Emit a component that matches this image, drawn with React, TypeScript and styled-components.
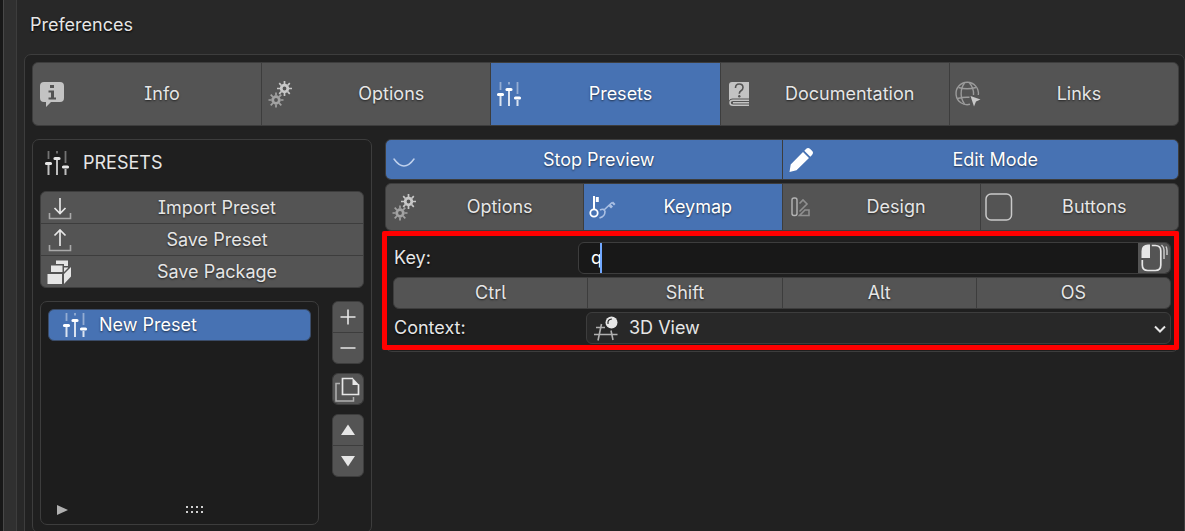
import React from "react";
import styled, { createGlobalStyle } from "styled-components";

const Global = createGlobalStyle`
  *, *::before, *::after { box-sizing: border-box; }
  html, body, #root { height: 100%; }
  body {
    margin: 0;
    background: #282828;
    overflow: hidden;
    color: #e6e6e6;
    font-family: Inter, "Liberation Sans", sans-serif;
    font-size: 18px;
    line-height: 24px;
    font-feature-settings: "cv05", "cv08";
  }
  button, input, select { font: inherit; color: inherit; font-feature-settings: inherit; }
`;

const line = "#3d3d3d";
const grey = "#545454";
const blue = "#4772b3";

const Shell = styled.div`
  display: flex;
  height: 100%;
  overflow: hidden;
`;

const Rail = styled.div`
  flex: none;
  width: 17px;
  border-left: 3px solid #181818;
  border-right: 1px solid ${line};
  background: #303030;
  box-shadow: inset 1px 0 0 #484848;
`;

const Page = styled.main`
  flex: 1;
  min-width: 0;
  display: flex;
  flex-direction: column;
  padding-left: 7px;
`;

const Title = styled.h1`
  margin: 0;
  padding: 13px 6px 17px;
  font-size: 18px;
  line-height: 24px;
  font-weight: 400;
  text-shadow: 0 1px 2px #000;
`;

const Window = styled.section`
  flex: none;
  border: 1px solid ${line};
  border-radius: 7px;
  background: #212121;
  padding: 7px 5px 7px 7px;
`;

const Columns = styled.div`
  display: flex;
  gap: 13px;
  margin-top: 13px;
`;

const Group = styled.div<{ $column?: boolean }>`
  display: flex;
  flex-direction: ${(p) => (p.$column ? "column" : "row")};
  gap: 1px;
  border: 1px solid ${line};
  border-radius: 6px;
  background: ${line};
  overflow: hidden;
`;

const Tool = styled.button<{ $h: number; $on?: boolean }>`
  flex: 1 1 0;
  min-width: 0;
  min-height: ${(p) => p.$h}px;
  display: flex;
  align-items: center;
  border: 0;
  padding: 0 4px;
  background: ${(p) => (p.$on ? blue : grey)};
  color: ${(p) => (p.$on ? "#fff" : "#e6e6e6")};
  text-shadow: 0 1px 2px rgba(0, 0, 0, 0.6);
  svg { flex: none; }
`;

const ToolText = styled.span`
  flex: 1;
  text-align: center;
`;

const Presets = styled.section`
  flex: none;
  width: 340px;
  border: 1px solid ${line};
  border-radius: 7px;
  background: #1f1f1f;
  padding: 8px 7px 7px;
`;

const PresetsTitle = styled.h2`
  display: flex;
  align-items: center;
  gap: 10px;
  margin: 0 0 13px 3px;
  font-size: 18px;
  line-height: 24px;
  font-weight: 400;
`;

const ListRow = styled.div`
  display: flex;
  gap: 13px;
  margin-top: 13px;
`;

const ListBox = styled.div`
  flex: 1;
  height: 224px;
  display: flex;
  flex-direction: column;
  justify-content: space-between;
  border: 1px solid ${line};
  border-radius: 7px;
  background: #1d1d1d;
  padding: 7px;
`;

const ListItem = styled.button`
  display: flex;
  align-items: center;
  gap: 8px;
  height: 32px;
  border: 1px solid #3b4c68;
  border-radius: 6px;
  background: ${blue};
  color: #fff;
  padding: 0 12px;
  text-shadow: 0 1px 2px rgba(0, 0, 0, 0.6);
`;

const ListFoot = styled.div`
  display: grid;
  grid-template-columns: 28px 1fr;
  align-items: center;
  padding: 0 8px 2px;
  svg:last-child { justify-self: center; }
`;

const SideTools = styled.div`
  flex: none;
  width: 32px;
  display: flex;
  flex-direction: column;
  gap: 9px;
`;

const SideButton = styled.button`
  display: grid;
  place-items: center;
  height: 30px;
  border: 0;
  padding: 0;
  background: ${grey};
`;

const Editor = styled.section`
  flex: 1;
  min-width: 0;
`;

const Rows = styled.div`
  display: flex;
  flex-direction: column;
  gap: 3px;
`;

const Keymap = styled.form`
  position: relative;
  display: flex;
  flex-direction: column;
  gap: 3px;
  border: 1px solid ${line};
  border-radius: 0 0 7px 7px;
  background: #1f1f1f;
  padding: 10px 7px 7px;
`;

const Highlight = styled.div`
  position: absolute;
  inset: -1px -1px 1px -4px;
  border: 5px solid #ff0000;
  border-radius: 2px;
  pointer-events: none;
`;

const Field = styled.div<{ $label: number }>`
  display: grid;
  grid-template-columns: ${(p) => p.$label}px 1fr;
  align-items: center;
  height: 32px;
  text-shadow: 0 1px 2px #000;
  label { padding-left: 1px; }
`;

const KeyBox = styled.div`
  display: flex;
  height: 32px;
  border: 1px solid ${line};
  border-radius: 6px;
  background: #181818;
  overflow: hidden;
`;

const Entry = styled.div`
  position: relative;
  flex: 1;
  display: flex;
`;

const KeyInput = styled.input`
  flex: 1;
  min-width: 0;
  border: 0;
  outline: 0;
  padding: 0 12px;
  background: transparent;
  color: #fff;
`;

const Caret = styled.span`
  position: absolute;
  left: 21px;
  top: 0;
  bottom: 0;
  width: 2px;
  background: #71a8ff;
`;

const MouseButton = styled.button`
  flex: none;
  width: 32px;
  display: grid;
  place-items: center;
  border: 0;
  padding: 0;
  background: ${grey};
`;

const SelectBox = styled.div`
  display: flex;
  align-items: center;
  height: 32px;
  border: 1px solid ${line};
  border-radius: 6px;
  background: #282828;
  padding: 0 4px 0 5px;
  gap: 7px;
`;

const Select = styled.select`
  flex: 1;
  min-width: 0;
  appearance: none;
  border: 0;
  background: transparent;
  padding: 0;
`;

const svg = { fill: "none", "aria-hidden": true } as const;

const Info = () => (
  <svg {...svg} width="30" height="30" viewBox="0 0 30 30">
    <path fill="#c3c3c3" d="M7 3h16a4 4 0 0 1 4 4v12a4 4 0 0 1-4 4H14l-5 5v-5H7a4 4 0 0 1-4-4V7a4 4 0 0 1 4-4Z" />
    <path fill={grey} d="M13 6h4v3h-4zM11.500 11.500H17V18.500h2V20.500h-7.500v-2H14v-5h-2.500z" />
  </svg>
);

const Gear = ({ x, y, c }: { x: number; y: number; c: string }) => (
  <g transform={`translate(${x} ${y})`} stroke={c}>
    <circle r="3.300" strokeWidth="2.800" />
    {[0, 45, 90, 135, 180, 225, 270, 315].map((a) => (
      <path key={a} d="M0-4.500V-7.500" strokeWidth="1.700" transform={`rotate(${a})`} />
    ))}
  </g>
);

const Gears = () => (
  <svg {...svg} width="30" height="30" viewBox="0 0 30 30">
    <Gear x={10} y={21} c="#a2a2a2" />
    <Gear x={18.500} y={9.500} c="#c8c8c8" />
  </svg>
);

const Sliders = () => (
  <svg {...svg} width="30" height="30" viewBox="1 0 30 30">
    <path stroke="currentColor" strokeOpacity=".42" strokeWidth="1.800" d="M6.500 3v8M15 3v2.500M23.500 3v12" />
    <path stroke="currentColor" strokeOpacity=".8" strokeWidth="2" d="M6.500 17v10M15 12v15M23.500 21v6" />
    <path stroke="currentColor" strokeWidth="3.200" strokeLinecap="round" d="M4.500 15.500h4M13 10.500h4M21.500 19h4" />
  </svg>
);

const Book = () => (
  <svg {...svg} width="30" height="30" viewBox="1 0 30 30">
    <path fill="#c3c3c3" d="M8 3h17v16.500H8.500Q6 19.500 5 21.500V6Q5 3 8 3Z" />
    <path stroke="#c3c3c3" strokeWidth="1.500" d="M25 21.300H9Q6 21.300 6 23.800t3 2.500h16M9 23.800h16" />
    <path stroke={grey} strokeWidth="1.600" d="M11.500 9q0-4 3.700-4 3.800 0 3.800 3.500 0 2-2 3.200-1.700 1-1.700 3" />
    <circle cx="15.300" cy="17.300" r="1.200" fill={grey} />
  </svg>
);

const Globe = () => (
  <svg {...svg} width="30" height="30" viewBox="1 0 30 30">
    <g stroke="#9b9b9b" strokeWidth="1.400">
      <path d="M17 25.300A11.200 11.200 0 1 1 25.300 16" />
      <path d="M11.500 4C7 10 7 19 11.500 25M16.500 4c3.500 4 4.300 8 4 12M5.500 8.500q8.500 2.500 17.500 0M4.500 19.500q6-1.700 12-1.200" />
    </g>
    <path fill="#c8c8c8" d="m17.500 17 10 3.500-4.500 2-2 5Z" />
  </svg>
);

const Eye = () => (
  <svg {...svg} width="30" height="30" viewBox="1 0 30 30">
    <path stroke="#bfd0ec" strokeWidth="1.500" strokeLinecap="round" d="M5 14q10 14 20 0" />
  </svg>
);

const Pencil = () => (
  <svg {...svg} width="30" height="30" viewBox="1 0 30 30">
    <path fill="#fff" d="m17 7 6 6L10.500 25.200 3.500 27l1.200-7.500ZM18.300 5.700 20 4q2-2 4.200 0L26 5.800q2 2 0 4.200l-1.700 1.700Z" />
  </svg>
);

const Keys = () => (
  <svg {...svg} width="30" height="30" viewBox="1 0 30 30">
    <circle cx="7" cy="21" r="3.700" stroke="#fff" strokeWidth="1.800" />
    <path stroke="#fff" strokeWidth="2" d="M7 17.500V4" />
    <path fill="#fff" d="M8.800 5h3v5h-3z" />
    <path stroke="#a9bfe3" strokeWidth="1.600" d="M13 18q4-2 5 1.500 0 5-5.500 6.500M17 18 25 10.500" />
    <path fill="#a9bfe3" d="m21.500 14 2-2 2.500 2.500-2 2ZM24.500 11l1.500-1.500 2.500 2.500L27 13.500Z" />
  </svg>
);

const Swatches = () => (
  <svg {...svg} width="30" height="30" viewBox="2 0 30 30">
    <rect x="7" y="6" width="5" height="17.500" rx="2" stroke="#b5b5b5" strokeWidth="1.400" />
    <path stroke="#8f8f8f" strokeWidth="1.600" d="M14.500 11.500 18 8l4 4-7.500 7.500M20 18h4v5.500h-9.500l6-6" />
  </svg>
);

const Square = () => (
  <svg {...svg} width="30" height="30" viewBox="1 0 30 30">
    <rect x="2" y="2" width="25.500" height="26" rx="5" stroke="#c9c9c9" strokeWidth="1.500" />
  </svg>
);

const Tray = ({ up }: { up?: boolean }) => (
  <svg {...svg} width="30" height="30" viewBox="0 0 30 30">
    <path stroke="#a9a9a9" strokeWidth="1.600" d="M4.500 20v5.500h21V20" />
    <path stroke="#e6e6e6" strokeWidth="1.700" d={up ? "M15 21V5M9.500 10.500 15 5l5.500 5.500" : "M15 5v15.500M9.500 15l5.500 5.500 5.500-5.500"} />
  </svg>
);

const Boxes = () => (
  <svg {...svg} width="30" height="30" viewBox="1 0 30 30">
    <path fill="#e6e6e6" d="M3.500 17H18v10H3.500ZM7 8.500h11.500V15H7ZM12 3.500h12V9h-4V7h-8ZM20 17l7-7v9.500L20 27ZM20 10.500h4V11l-4 4Z" />
  </svg>
);

const Plus = ({ minus }: { minus?: boolean }) => (
  <svg {...svg} width="30" height="30" viewBox="0 0 30 30">
    <path stroke="#e6e6e6" strokeWidth="1.600" d={minus ? "M7.500 15h15" : "M7.500 15h15M15 7.500v15"} />
  </svg>
);

const Copy = () => (
  <svg {...svg} width="30" height="30" viewBox="1 0 30 30">
    <path stroke="#b0b0b0" strokeWidth="1.500" d="M8 9.500H4v17.500h17.500v-4" />
    <path stroke="#e6e6e6" strokeWidth="1.700" d="M21 4.500H10.500v16H26.500v-10" />
    <path fill="#e6e6e6" d="M20.500 3.700 27.300 11h-6.800Z" />
  </svg>
);

const Arrow = ({ down }: { down?: boolean }) => (
  <svg {...svg} width="30" height="30" viewBox="0 0 30 30">
    <path fill="#e6e6e6" d={down ? "M8 10h14l-7 10.500Z" : "M8 20h14L15 9.500Z"} />
  </svg>
);

const Mouse = () => (
  <svg {...svg} width="30" height="30" viewBox="0 0 30 30">
    <path fill="#e6e6e6" d="M2.500 15V8q0-6.500 6.500-6.500h2V15Z" />
    <path stroke="#e6e6e6" strokeWidth="1.700" d="M3.300 17v5q0 5.500 5.500 5.500h7.500q5.500 0 5.500-5.500V8q0-5.500-5.500-5.500h-3.500" />
    <path stroke="#c8c8c8" strokeWidth="1.500" d="M22.500 2q2.500 2 2.500 5v9M27 3.500q1 2 1 4v4.500" />
  </svg>
);

const View3D = () => (
  <svg {...svg} width="30" height="30" viewBox="0 0 30 30">
    <path stroke="#b0b0b0" strokeWidth="1.600" d="M2 21.500h23.500M4 14.500h9M9.500 11 6 27.500M19 17.500l2 9.500" />
    <circle cx="19.500" cy="9.500" r="6" fill="#e6e6e6" />
    <path stroke="#282828" strokeWidth="1.200" strokeLinecap="round" d="M16 10.500q-.5-4 3.500-4.500" />
  </svg>
);

const Chevron = () => (
  <svg {...svg} width="12" height="12" viewBox="0 0 12 12">
    <path stroke="#e6e6e6" strokeWidth="2" d="m1 4.500 5 5 5-5" />
  </svg>
);

const tabs = [
  { name: "Info", icon: <Info /> },
  { name: "Options", icon: <Gears /> },
  { name: "Presets", icon: <Sliders />, on: true },
  { name: "Documentation", icon: <Book /> },
  { name: "Links", icon: <Globe /> },
];

const subTabs = [
  { name: "Options", icon: <Gears /> },
  { name: "Keymap", icon: <Keys />, on: true },
  { name: "Design", icon: <Swatches /> },
  { name: "Buttons", icon: <Square /> },
];

type ToolProps = { name: string; icon?: React.ReactNode; on?: boolean; h: number };
const ToolButton = ({ name, icon, on, h }: ToolProps) => (
  <Tool type="button" $h={h} $on={on}>
    {icon}
    <ToolText>{name}</ToolText>
  </Tool>
);

export default function App() {
  return (
    <Shell>
      <Global />
      <Rail />
      <Page>
        <Title>Preferences</Title>
        <Window>
          <Group>
            {tabs.map((t) => <ToolButton key={t.name} {...t} h={62} />)}
          </Group>
          <Columns>
            <Presets>
              <PresetsTitle><Sliders />PRESETS</PresetsTitle>
              <Group $column>
                <ToolButton name="Import Preset" icon={<Tray />} h={31} />
                <ToolButton name="Save Preset" icon={<Tray up />} h={31} />
                <ToolButton name="Save Package" icon={<Boxes />} h={31} />
              </Group>
              <ListRow>
                <ListBox>
                  <ListItem type="button"><Sliders />New Preset</ListItem>
                  <ListFoot>
                    <svg {...svg} width="12" height="10" viewBox="0 0 12 10"><path fill="#b0b0b0" d="M1 0v10l11-5Z" /></svg>
                    <svg {...svg} width="18" height="8" viewBox="0 0 18 8">
                      {[1, 6, 11, 16].map((x) => (
                        <path key={x} fill="#d0d0d0" d={`M${x} 0h2v2h-2zM${x} 5h2v2h-2z`} />
                      ))}
                    </svg>
                  </ListFoot>
                </ListBox>
                <SideTools>
                  <Group $column>
                    <SideButton type="button" aria-label="Add"><Plus /></SideButton>
                    <SideButton type="button" aria-label="Remove"><Plus minus /></SideButton>
                  </Group>
                  <Group $column>
                    <SideButton type="button" aria-label="Duplicate"><Copy /></SideButton>
                  </Group>
                  <Group $column>
                    <SideButton type="button" aria-label="Move up"><Arrow /></SideButton>
                    <SideButton type="button" aria-label="Move down"><Arrow down /></SideButton>
                  </Group>
                </SideTools>
              </ListRow>
            </Presets>
            <Editor>
              <Rows>
                <Group>
                  <ToolButton name="Stop Preview" icon={<Eye />} on h={39} />
                  <ToolButton name="Edit Mode" icon={<Pencil />} on h={39} />
                </Group>
                <Group>
                  {subTabs.map((t) => <ToolButton key={t.name} {...t} h={46} />)}
                </Group>
              </Rows>
              <Keymap>
                <Field $label={185}>
                  <label htmlFor="key">Key:</label>
                  <KeyBox>
                    <Entry>
                      <KeyInput id="key" defaultValue="q" />
                      <Caret />
                    </Entry>
                    <MouseButton type="button" aria-label="Mouse event"><Mouse /></MouseButton>
                  </KeyBox>
                </Field>
                <Group>
                  {["Ctrl", "Shift", "Alt", "OS"].map((k) => <ToolButton key={k} name={k} h={30} />)}
                </Group>
                <Field $label={193}>
                  <label htmlFor="context">Context:</label>
                  <SelectBox>
                    <View3D />
                    <Select id="context" defaultValue="3D View"><option>3D View</option></Select>
                    <Chevron />
                  </SelectBox>
                </Field>
                <Highlight />
              </Keymap>
            </Editor>
          </Columns>
        </Window>
      </Page>
    </Shell>
  );
}
